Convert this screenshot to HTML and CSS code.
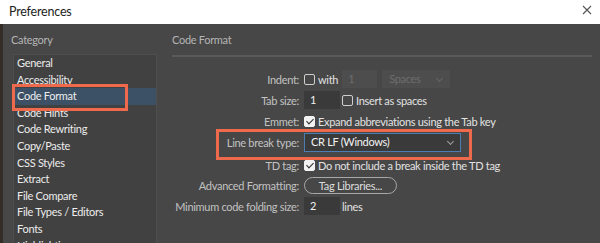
FILE: index.html
```html
<!DOCTYPE html>
<html lang="en">
<head>
    <meta charset="UTF-8">
    <meta name="viewport" content="width=device-width, initial-scale=1.0">
    <title>Preferences</title>
<link rel="stylesheet" href="styles.css">
</head>
<body>
    <div class="titlebar">
        <span class="title">Preferences</span>
        <svg class="close" width="10" height="10" viewBox="0 0 10 10">
            <path d="M1 1L9 9M9 1L1 9" stroke="#555" stroke-width="1.1" fill="none"/>
        </svg>
    </div>
    <div class="dialog">
        <div class="category">
            <div class="pane-title">Category</div>
            <ul class="cat-list">
                <li>General</li>
                <li>Accessibility</li>
                <li class="selected marked">Code Format</li>
                <li>Code Hints</li>
                <li>Code Rewriting</li>
                <li>Copy/Paste</li>
                <li>CSS Styles</li>
                <li>Extract</li>
                <li>File Compare</li>
                <li>File Types / Editors</li>
                <li>Fonts</li>
                <li>Highlighting</li>
            </ul>
        </div>
        <div class="settings">
            <div class="pane-title">Code Format</div>
            <div class="divider"></div>
            <div class="form">
                <div class="row">
                    <label class="lbl">Indent:</label>
                    <span class="check"></span>
                    <span class="txt">with</span>
                    <span class="field disabled w-indent">1</span>
                    <span class="select disabled w-spaces">Spaces<i class="chev"></i></span>
                </div>
                <div class="row">
                    <label class="lbl">Tab size:</label>
                    <span class="field w-num">1</span>
                    <span class="check"></span>
                    <span class="txt">Insert as spaces</span>
                </div>
                <div class="row">
                    <label class="lbl">Emmet:</label>
                    <span class="check on"></span>
                    <span class="txt">Expand abbreviations using the Tab key</span>
                </div>
                <div class="row tall marked">
                    <label class="lbl">Line break type:</label>
                    <span class="select focus w-lb">CR LF (Windows)<i class="chev"></i></span>
                </div>
                <div class="row">
                    <label class="lbl">TD tag:</label>
                    <span class="check on"></span>
                    <span class="txt">Do not include a break inside the TD tag</span>
                </div>
                <div class="row short">
                    <label class="lbl">Advanced Formatting:</label>
                    <button class="pill">Tag Libraries...</button>
                </div>
                <div class="row">
                    <label class="lbl">Minimum code folding size:</label>
                    <span class="field w-num">2</span>
                    <span class="txt">lines</span>
                </div>
            </div>
        </div>
    </div>
</body>
</html>
```

FILE: styles.css
```css
*{
    margin: 0;
    padding: 0;
    box-sizing: border-box;
}
html,body{
    height: 100%;
}
body{
    width: 600px;
    height: 243px;
    overflow: hidden;
    background: #474747;
    font-family: "Lato", "Open Sans", sans-serif;
    font-size: 11px;
    letter-spacing: -0.3px;
    color: #e2e2e2;
}
.titlebar{
    height: 24px;
    background: #fff;
    display: flex;
    align-items: center;
    justify-content: space-between;
    padding: 0 8px 2px 9px;
}
.title{
    font-size: 12.5px;
    letter-spacing: -0.2px;
    color: #1e1e1e;
}
.close{
    margin-top: -2px;
}
.dialog{
    display: flex;
    height: 219px;
    border-left: 3px solid #332d27;
}
.pane-title{
    color: #b4b4b4;
    font-size: 11px;
    line-height: 14px;
    padding-top: 9px;
}
.category{
    flex: 0 0 169px;
    padding-left: 10px;
}
.category .pane-title{
    margin-left: -2px;
}
.cat-list{
    list-style: none;
    margin-top: 7px;
    width: 144px;
    height: 200px;
    background: #414141;
    border: 1px solid #4e4e4e;
}
.cat-list li{
    height: 16.6px;
    line-height: 16.6px;
    padding-left: 3px;
    color: #ececec;
    white-space: nowrap;
}
.cat-list li.selected{
    background: #3c5166;
}
.marked{
    position: relative;
}
/* 標註框 */
.cat-list li.marked::after{
    content: "";
    position: absolute;
    left: -2px;
    top: -4px;
    width: 110px;
    height: 21px;
    border: 3px solid #ef6a4c;
}
.settings{
    flex: 1;
    padding-right: 8px;
}
.divider{
    height: 2px;
    background: #5a5a5a;
    margin-top: 8px;
}
.form{
    display: flex;
    flex-direction: column;
    gap: 3px;
    margin-top: 13px;
}
.row{
    display: flex;
    align-items: center;
    height: 18px;
}
.row.tall{
    height: 19px;
    margin-bottom: 1px;
}
.row.short{
    height: 17px;
}
.row.marked::after{
    content: "";
    position: absolute;
    left: 44px;
    top: -4px;
    width: 250px;
    height: 25px;
    border: 3px solid #ef6a4c;
}
.lbl{
    width: 127px;
    text-align: right;
    color: #c2c2c2;
    margin-right: 5px;
    white-space: nowrap;
}
.txt{
    color: #e2e2e2;
    white-space: nowrap;
}
.check{
    width: 11px;
    height: 11px;
    border: 1px solid #cfcfcf;
    border-radius: 2px;
    margin-right: 3px;
    display: inline-flex;
    align-items: center;
    justify-content: center;
}
.check.on{
    background: #f2f2f2;
    border-color: #f2f2f2;
}
.check.on::after{
    content: "";
    width: 3px;
    height: 6px;
    border: solid #2a2a2a;
    border-width: 0 1.5px 1.5px 0;
    transform: rotate(45deg);
    margin-top: -2px;
}
.field{
    height: 18px;
    background: #3a3a3a;
    color: #f0f0f0;
    padding-left: 6px;
    line-height: 18px;
    margin-right: 2px;
}
.field.disabled,.select.disabled{
    background: #4d4d4d;
    color: #6e6e6e;
}
.w-indent{
    width: 35px;
    margin-left: 4px;
}
.w-num{
    width: 36px;
}
.select{
    position: relative;
    height: 18px;
    line-height: 16px;
    background: #3a3a3a;
    border: 1px solid transparent;
    padding-left: 6px;
    color: #f2f2f2;
    margin-left: 3px;
}
.select.focus{
    border-color: #4b7db3;
    margin-left: 0;
    height: 19px;
}
.w-spaces{
    width: 68px;
}
.w-lb{
    width: 157px;
}
.chev{
    position: absolute;
    right: 7px;
    top: 5px;
    width: 5px;
    height: 5px;
    border: solid #a0a0a0;
    border-width: 0 1px 1px 0;
    transform: rotate(45deg);
}
.select.disabled .chev{
    border-color: #656565;
}
.pill{
    width: 93px;
    height: 17px;
    border: 1px solid #a8a8a8;
    border-radius: 9px;
    background: transparent;
    color: #dedede;
    font-family: inherit;
    font-size: 11px;
    letter-spacing: -0.3px;
}
```
